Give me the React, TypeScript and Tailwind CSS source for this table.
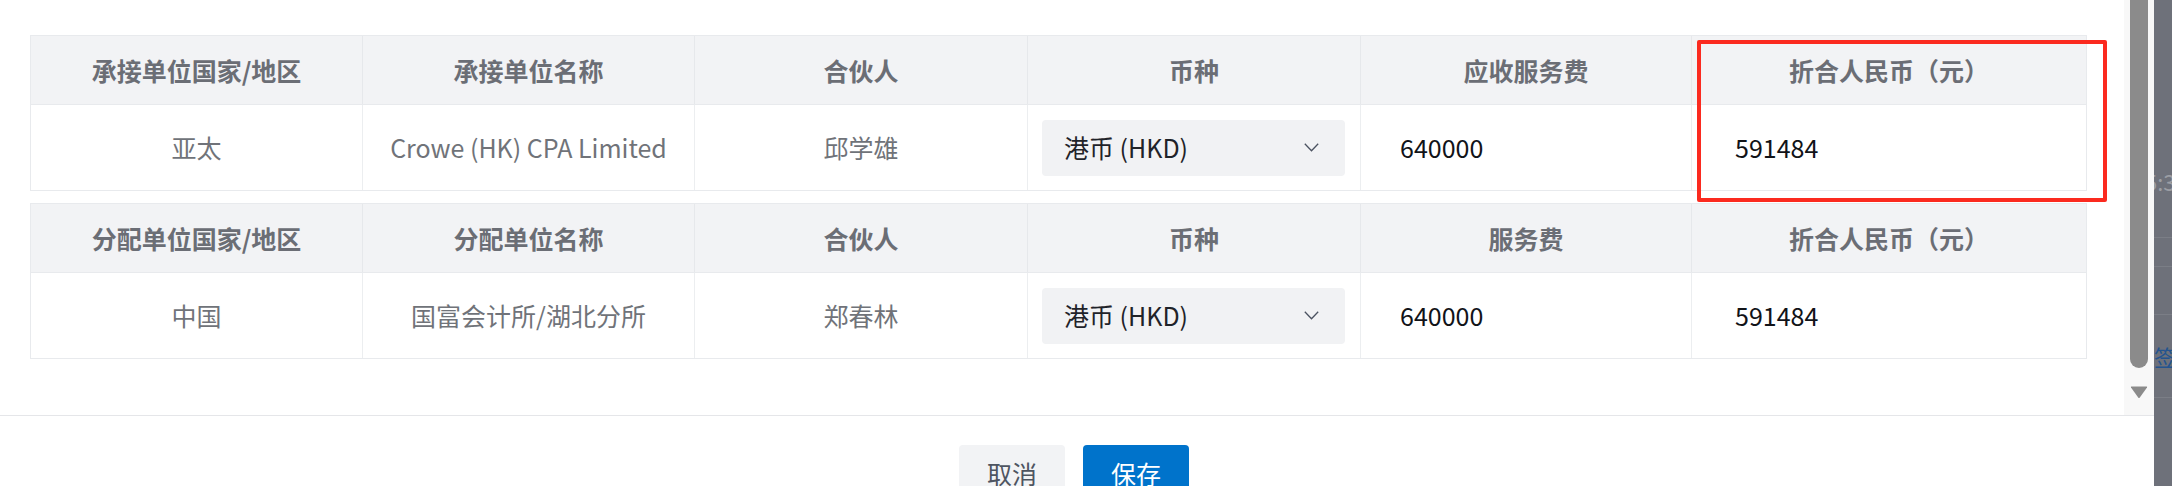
import clsx from "clsx";

type Cell = { text: string; kind: "plain" | "select" | "num" };

const gridCols = "grid grid-cols-[331px_332px_333px_333px_331px_395px]";

const firstHeaders = ["承接单位国家/地区", "承接单位名称", "合伙人", "币种", "应收服务费", "折合人民币（元）"];
const secondHeaders = ["分配单位国家/地区", "分配单位名称", "合伙人", "币种", "服务费", "折合人民币（元）"];

const firstRow: Cell[] = [
  { text: "亚太", kind: "plain" },
  { text: "Crowe (HK) CPA Limited", kind: "plain" },
  { text: "邱学雄", kind: "plain" },
  { text: "港币 (HKD)", kind: "select" },
  { text: "640000", kind: "num" },
  { text: "591484", kind: "num" },
];

const secondRow: Cell[] = [
  { text: "中国", kind: "plain" },
  { text: "国富会计所/湖北分所", kind: "plain" },
  { text: "郑春林", kind: "plain" },
  { text: "港币 (HKD)", kind: "select" },
  { text: "640000", kind: "num" },
  { text: "591484", kind: "num" },
];

function Chevron() {
  return (
    <svg width="15" height="9" viewBox="0 0 15 9" fill="none" className="shrink-0">
      <polyline points="0.8,0.8 7.5,7.8 14.2,0.8" stroke="#4b5260" strokeWidth="1.3" />
    </svg>
  );
}

function FeeTable({ headers, row }: { headers: string[]; row: Cell[] }) {
  return (
    <div className="border border-[#e8eaed]">
      <div className={clsx(gridCols, "h-[68px] bg-[#f2f3f5]")}>
        {headers.map((h, i) => (
          <div
            key={h + i}
            className={clsx(
              "flex items-center justify-center font-bold text-[#6b6e75]",
              i > 0 && "border-l border-[#e6e8eb]"
            )}
          >
            {h}
          </div>
        ))}
      </div>
      <div className={clsx(gridCols, "h-[86px] border-t border-[#e8eaed] bg-white")}>
        {row.map((c, i) => (
          <div key={i} className={clsx("flex items-center", i > 0 && "border-l border-[#eceef0]")}>
            {c.kind === "plain" && <span className="w-full text-center text-[#707379]">{c.text}</span>}
            {c.kind === "select" && (
              <div className="ml-[14px] mr-[15px] flex h-[56px] flex-1 items-center justify-between rounded-[4px] bg-[#f1f2f4] pl-[22px] pr-[26px] text-[#1f2329]">
                <span>{c.text}</span>
                <Chevron />
              </div>
            )}
            {c.kind === "num" && (
              <span className={clsx("text-[#111318]", i === 4 ? "pl-[39px]" : "pl-[43px]")}>{c.text}</span>
            )}
          </div>
        ))}
      </div>
    </div>
  );
}

export default function App() {
  return (
    <div className="relative flex h-[486px] w-[2172px] overflow-hidden bg-white font-['Noto_Sans_CJK_SC',sans-serif] text-[25px] leading-none">
      {/* modal */}
      <div className="flex w-[2154px] shrink-0 flex-col">
        <div className="flex h-[416px] shrink-0 border-b border-[#e5e6e9]">
          <div className="flex-1 pl-[30px]">
            <div className="mt-[35px] w-[2057px]">
              <FeeTable headers={firstHeaders} row={firstRow} />
            </div>
            <div className="mt-[12px] w-[2057px]">
              <FeeTable headers={secondHeaders} row={secondRow} />
            </div>
          </div>
          {/* scrollbar */}
          <div className="flex w-[30px] flex-col bg-[#f8f8f8]">
            <div className="ml-[6px] h-[368px] w-[18px] rounded-b-full bg-[#8b8b8b]" />
            <svg width="18" height="14" viewBox="0 0 18 14" className="ml-[6px] mt-[17px]">
              <path d="M1.5 1.5 H16.5 Q17.5 1.5 17 2.5 L9.8 12.5 Q9 13.5 8.2 12.5 L1 2.5 Q0.5 1.5 1.5 1.5 Z" fill="#8b8b8b" />
            </svg>
          </div>
        </div>
        <div className="flex shrink-0 justify-center gap-[18px] pr-[6px] pt-[29px]">
          <button className="flex h-[56px] w-[106px] items-center justify-center rounded-[4px] bg-[#f2f3f5] text-[#4e5561]">
            取消
          </button>
          <button className="flex h-[56px] w-[106px] items-center justify-center rounded-[4px] bg-[#0073cb] text-white">
            保存
          </button>
        </div>
      </div>

      {/* page behind the overlay */}
      <div className="flex w-[18px] shrink-0 flex-col overflow-hidden bg-[#6e717a]">
        <div className="h-[238px] shrink-0 border-b border-[#7b7e86] pt-[170px]">
          <span className="-ml-[9px] block whitespace-nowrap text-[22px] text-[#9c9ea4]">5:3</span>
        </div>
        <div className="h-[29px] shrink-0 border-b border-[#7b7e86]" />
        <div className="h-[48px] shrink-0 border-b border-[#7b7e86]" />
        <div className="h-[83px] shrink-0 border-b border-[#7b7e86] pt-[30px]">
          <span className="block whitespace-nowrap text-[22px] text-[#24548f]">签</span>
        </div>
      </div>

      {/* annotation box */}
      <div className="absolute left-[1697px] top-[40px] h-[162px] w-[410px] rounded-[2px] border-4 border-[#fb2a1f]" />
    </div>
  );
}
